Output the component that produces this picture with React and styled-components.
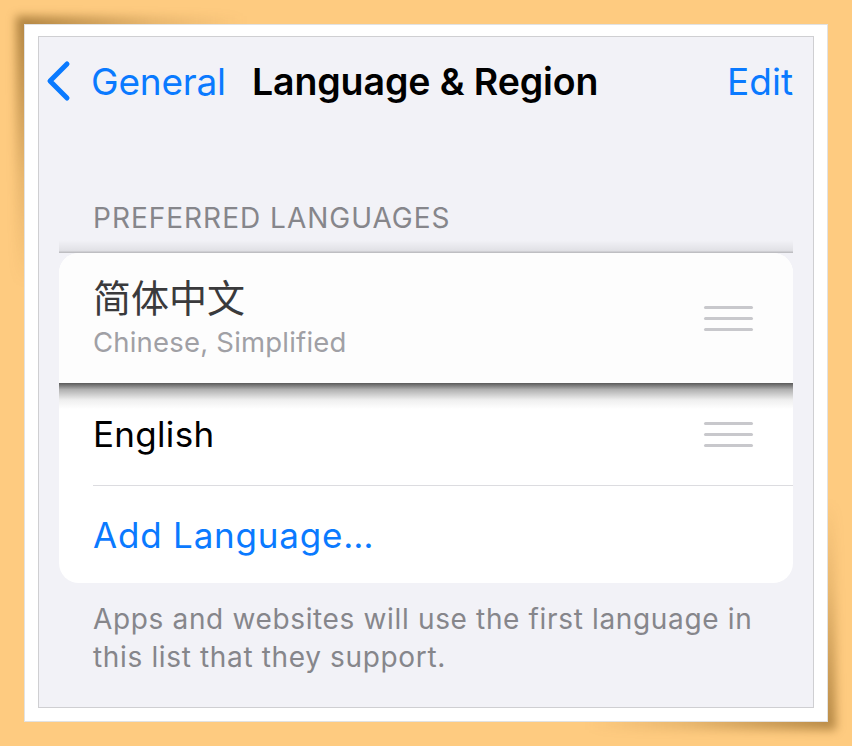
import React from 'react'
import styled, { createGlobalStyle } from 'styled-components'

const GlobalStyle = createGlobalStyle`
  html {
    background: #fecb80;
  }
  body {
    margin: 0;
    padding: 0;
    font-family: Inter, "Noto Sans", sans-serif;
    -webkit-font-smoothing: antialiased;
  }
`

const Page = styled.div`
  padding: 24px;
  width: 852px;
  height: 746px;
  box-sizing: border-box;
`

const Frame = styled.div`
  position: relative;
  width: 804px;
  height: 698px;
  box-sizing: border-box;
  background: #fff;
  border: 1px solid #e2e2e2;
  padding: 11px 13px 13px 13px;

  &::before,
  &::after {
    content: '';
    position: absolute;
    z-index: -1;
    filter: blur(5px);
  }
  &::before {
    top: -9px;
    left: -9px;
    width: 260px;
    height: 300px;
    background: radial-gradient(ellipse 230px 270px at 0 0, rgba(110, 70, 10, 0.55), rgba(110, 70, 10, 0.15) 60%, rgba(110, 70, 10, 0) 100%);
  }
  &::after {
    right: -9px;
    bottom: -9px;
    width: 280px;
    height: 260px;
    background: radial-gradient(ellipse 250px 230px at 100% 100%, rgba(110, 70, 10, 0.5), rgba(110, 70, 10, 0.15) 60%, rgba(110, 70, 10, 0) 100%);
  }
`

const Screen = styled.div`
  height: 100%;
  box-sizing: border-box;
  background: #f2f2f7;
  border: 1px solid #cfcfd2;
  display: flex;
  flex-direction: column;
`

const NavBar = styled.div`
  height: 88px;
  display: flex;
  align-items: center;
  padding: 0 20px 0 6px;
`

const BackButton = styled.div`
  display: flex;
  align-items: center;
  gap: 20px;
  color: #0a7aff;
  font-size: 37px;
  letter-spacing: -0.2px;
`

const Title = styled.div`
  margin-left: 26px;
  font-size: 37.5px;
  font-weight: 600;
  color: #000;
  letter-spacing: -0.1px;
  flex: 1;
`

const NavAction = styled.div`
  color: #0a7aff;
  font-size: 37px;
`

const SectionHeader = styled.div`
  margin: 76px 0 0 54px;
  font-size: 28px;
  line-height: 34px;
  color: #86868b;
  letter-spacing: 1px;
`

const Card = styled.div`
  margin: 18px 20px 0 20px;
  background: #fff;
  border-radius: 20px;
  display: flex;
  flex-direction: column;
`

const Row = styled.div`
  position: relative;
  display: flex;
  align-items: center;
  justify-content: space-between;
  height: ${p => p.$height}px;
  padding: 0 40px 0 34px;
  background: ${p => (p.$lifted ? '#fdfdfd' : 'transparent')};
  border-radius: ${p => (p.$lifted ? '20px 20px 0 0' : '0')};
  z-index: ${p => (p.$lifted ? 1 : 0)};

  ${p =>
    p.$lifted &&
    `
    &::before {
      content: '';
      position: absolute;
      left: 0;
      right: 0;
      top: -13px;
      height: 13px;
      background: linear-gradient(to bottom, rgba(0,0,0,0) 0%, rgba(0,0,0,0.07) 80%, rgba(0,0,0,0.25) 100%);
    }
    &::after {
      content: '';
      position: absolute;
      left: 0;
      right: 0;
      bottom: -26px;
      height: 26px;
      background: linear-gradient(to bottom, rgba(60,60,60,0.85) 0%, rgba(80,80,80,0.45) 25%, rgba(120,120,120,0.12) 65%, rgba(255,255,255,0) 100%);
    }
  `}
`

const Divider = styled.div`
  height: 1px;
  margin-left: 34px;
  background: #dcdce0;
`

const Texts = styled.div`
  display: flex;
  flex-direction: column;
  margin-top: -4px;
`

const NativeName = styled.div`
  font-family: "Noto Sans CJK SC", Inter, sans-serif;
  font-size: 38px;
  font-weight: 400;
  line-height: 44px;
  color: #3a3a3c;
`

const Subtitle = styled.div`
  margin-top: 8px;
  font-size: 27.5px;
  line-height: 32px;
  color: #a0a0a5;
  letter-spacing: 0.2px;
`

const Label = styled.div`
  font-size: 35px;
  color: ${p => (p.$link ? '#0a7aff' : '#000')};
  letter-spacing: ${p => (p.$link ? '0.8px' : '0.3px')};
`

const Handle = styled.div`
  display: flex;
  flex-direction: column;
  gap: 8px;
  width: 49px;
`

const HandleLine = styled.span`
  display: block;
  height: 3px;
  border-radius: 2px;
  background: #c8c8cc;
`

const Footnote = styled.div`
  margin: 17px 40px 0 54px;
  font-size: 28px;
  line-height: 38px;
  color: #86868b;
  letter-spacing: 0.65px;
`

function Chevron() {
  return (
    <svg width="26" height="42" viewBox="0 0 26 42">
      <path d="M22 4 L5 21 L22 38" fill="none" stroke="#0a7aff" strokeWidth="5" strokeLinecap="round" strokeLinejoin="round" />
    </svg>
  )
}

function DragHandle() {
  return (
    <Handle>
      <HandleLine />
      <HandleLine />
      <HandleLine />
    </Handle>
  )
}

export default function App() {
  return (
    <>
      <GlobalStyle />
      <Page>
        <Frame>
          <Screen>
            <NavBar>
              <BackButton>
                <Chevron />
                <span>General</span>
              </BackButton>
              <Title>Language &amp; Region</Title>
              <NavAction>Edit</NavAction>
            </NavBar>

            <SectionHeader>PREFERRED LANGUAGES</SectionHeader>
            <Card>
              <Row $height={130} $lifted>
                <Texts>
                  <NativeName>简体中文</NativeName>
                  <Subtitle>Chinese, Simplified</Subtitle>
                </Texts>
                <DragHandle />
              </Row>
              <Row $height={102}>
                <Label>English</Label>
                <DragHandle />
              </Row>
              <Divider />
              <Row $height={97}>
                <Label $link>Add Language…</Label>
              </Row>
            </Card>
            <Footnote>
              Apps and websites will use the first language in this list that they support.
            </Footnote>
          </Screen>
        </Frame>
      </Page>
    </>
  )
}
